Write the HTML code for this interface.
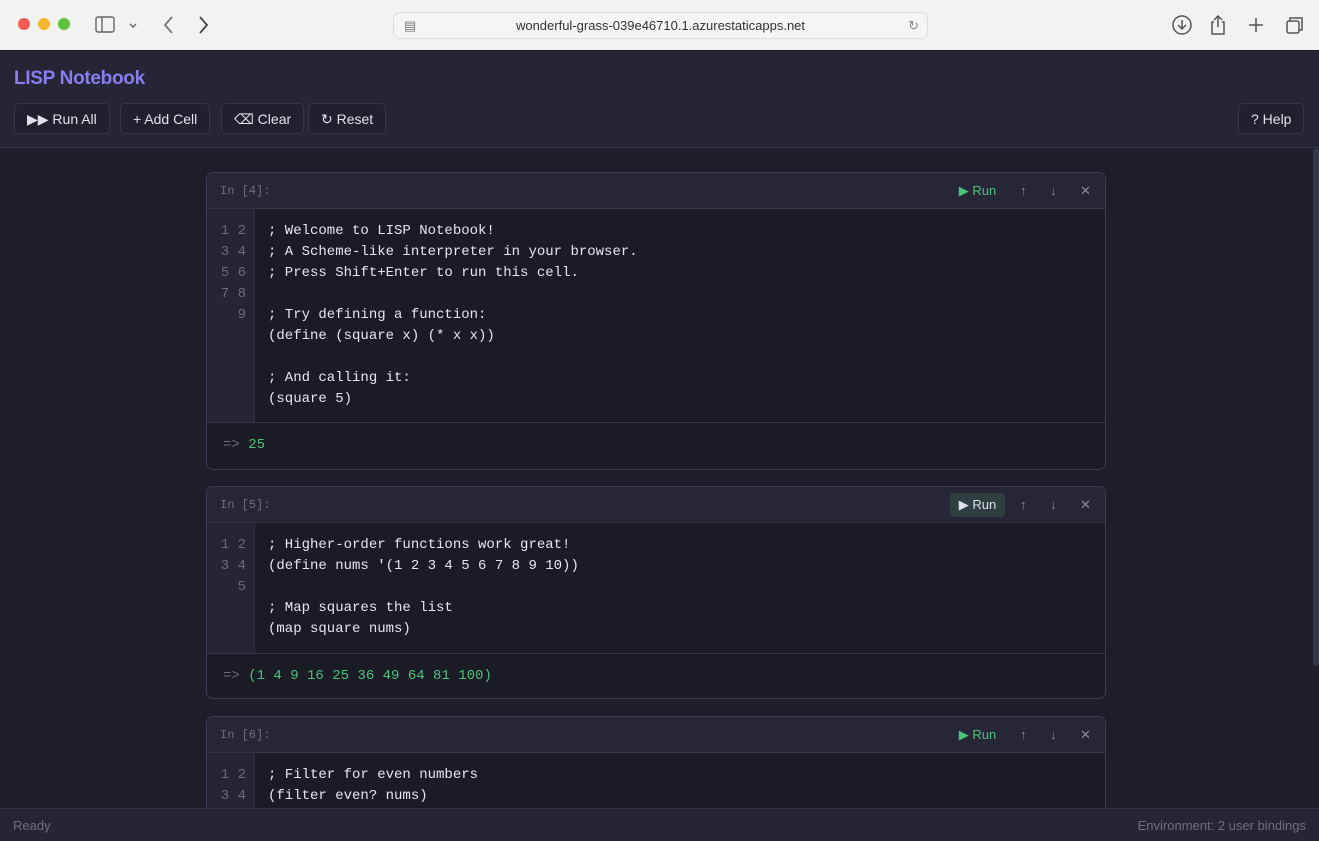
<!DOCTYPE html>
<html style="overflow:hidden;height:841px"><head><style>
*{box-sizing:border-box;margin:0;padding:0}
body{width:1319px;height:841px;overflow:hidden;background:#1e1e2b;font-family:"Liberation Sans",sans-serif;position:relative}
.chrome{position:absolute;left:0;top:0;width:1319px;height:51px;background:#f2f2f0;border-bottom:1px solid #1a1a1a}
.dot{position:absolute;top:18px;width:12px;height:12px;border-radius:50%}
.url{position:absolute;left:393px;top:12px;width:535px;height:27px;border:1px solid #ddd;border-radius:7px;background:#f5f5f3;font-size:13px;color:#333;text-align:center;line-height:26px}
.hdr{position:absolute;left:0;top:51px;width:1319px;height:97px;background:#252535;border-bottom:1px solid #34344a}
.title{position:absolute;left:14px;top:17px;font-size:19px;font-weight:bold;color:#8b7cf0;letter-spacing:-0.3px}
.btn{position:absolute;top:52px;height:31px;border:1px solid #36364a;border-radius:5px;background:#20202f;color:#e2e2ea;font-size:14px;line-height:30px;padding:0 12px}
.cell{position:absolute;left:206px;width:900px;border:1px solid #3a3a50;border-radius:7px;overflow:hidden;background:#1b1b25}
.ch{height:36px;background:#262637;border-bottom:1px solid #35354a;font-family:"Liberation Mono",monospace;font-size:12px;color:#6e6e82;padding-left:13px;line-height:36px;position:relative}
.acts{position:absolute;right:0;top:0;height:36px}
.run{position:absolute;top:6px;right:100px;width:55px;height:24px;border-radius:4px;color:#4cc17a;font-family:"Liberation Sans",sans-serif;font-size:13px;line-height:24px;text-align:center}
.run.h{background:#2f3e3e;color:#e0e0e8}
.ic{position:absolute;top:0;font-family:"Liberation Sans",sans-serif;color:#8a8a9c;font-size:13px}
.code{display:flex;font-family:"Liberation Mono",monospace;font-size:14px;line-height:21px}
.gut{width:48px;background:#252533;color:#6a6a7c;text-align:right;padding:12px 8px 0 0;border-right:1px solid #30303f}
.src{padding:12px 0 0 13px;color:#e6e6ee;white-space:pre}
.out{border-top:1px solid #35354a;height:46px;padding-left:16px;font-family:"Liberation Mono",monospace;font-size:14px;line-height:45px;color:#6a6a7c}
.out span{color:#4cc17a}
.status{position:absolute;left:0;top:808px;width:1319px;height:33px;background:#252535;border-top:1px solid #34344a;font-size:13px;color:#6e6e80;line-height:34px;padding:0 13px}
</style></head><body>
<div class="chrome">
<div class="dot" style="left:18px;background:#ee5d55"></div>
<div class="dot" style="left:38px;background:#f2b72c"></div>
<div class="dot" style="left:58px;background:#5fc13e"></div>
<svg style="position:absolute;left:95px;top:16px" width="44" height="18" fill="none" stroke="#666" stroke-width="1.4"><rect x="1" y="1" width="18" height="15" rx="2"/><line x1="7" y1="1" x2="7" y2="16"/><path d="M35 8l3 3 3-3"/></svg>
<svg style="position:absolute;left:160px;top:14px" width="55" height="22" fill="none" stroke="#777" stroke-width="1.8"><path d="M12 3L5 11l7 8"/><path d="M40 3l7 8-7 8" stroke="#444"/></svg>
<div class="url"><span style="position:absolute;left:10px;top:0;color:#777">▤</span>wonderful-grass-039e46710.1.azurestaticapps.net<span style="position:absolute;right:8px;color:#888">↻</span></div>
<svg style="position:absolute;left:1170px;top:13px" width="140" height="24" fill="none" stroke="#555" stroke-width="1.5"><circle cx="12" cy="12" r="9"/><path d="M12 7v9M8 12l4 4 4-4"/><path d="M44 9h-2v12h12V9h-2M48 14V3M44 7l4-4 4 4"/><path d="M86 5v14M79 12h14"/><rect x="117" y="8" width="12" height="12" rx="2"/><path d="M120 8V5h12v12h-3"/></svg>
</div>
<div class="hdr">
<div class="title">LISP Notebook</div>
<div class="btn" style="left:14px">▶▶ Run All</div>
<div class="btn" style="left:120px">+ Add Cell</div>
<div class="btn" style="left:221px">⌫ Clear</div>
<div class="btn" style="left:308px">↻ Reset</div>
<div class="btn" style="left:1238px">? Help</div>
</div>
<div style="position:absolute;left:1313px;top:148px;width:6px;height:518px;background:#35354a;border-radius:3px"></div>

<div class="cell" style="top:172px;height:298px">
<div class="ch">In [4]:<div class="acts"><div class="run">▶ Run</div></div>
<span class="ic" style="left:813px">↑</span><span class="ic" style="left:843px">↓</span><span class="ic" style="left:873px">✕</span></div>
<div class="code" style="height:213px"><div class="gut">1 2<br>3 4<br>5 6<br>7 8<br>9</div><div class="src">; Welcome to LISP Notebook!
; A Scheme-like interpreter in your browser.
; Press Shift+Enter to run this cell.

; Try defining a function:
(define (square x) (* x x))

; And calling it:
(square 5)</div></div>
<div class="out">=&gt; <span>25</span></div>
</div>

<div class="cell" style="top:486px;height:213px">
<div class="ch">In [5]:<div class="acts"><div class="run h">▶ Run</div></div>
<span class="ic" style="left:813px">↑</span><span class="ic" style="left:843px">↓</span><span class="ic" style="left:873px">✕</span></div>
<div class="code" style="height:130px"><div class="gut">1 2<br>3 4<br>5</div><div class="src">; Higher-order functions work great!
(define nums '(1 2 3 4 5 6 7 8 9 10))

; Map squares the list
(map square nums)</div></div>
<div class="out">=&gt; <span>(1 4 9 16 25 36 49 64 81 100)</span></div>
</div>

<div class="cell" style="top:716px;height:125px;border-bottom:none;border-radius:7px 7px 0 0">
<div class="ch">In [6]:<div class="acts"><div class="run">▶ Run</div></div>
<span class="ic" style="left:813px">↑</span><span class="ic" style="left:843px">↓</span><span class="ic" style="left:873px">✕</span></div>
<div class="code" style="height:90px"><div class="gut">1 2<br>3 4</div><div class="src">; Filter for even numbers
(filter even? nums)</div></div>
</div>

<div class="status">Ready<span style="float:right">Environment: 2 user bindings</span></div>
</body></html>
